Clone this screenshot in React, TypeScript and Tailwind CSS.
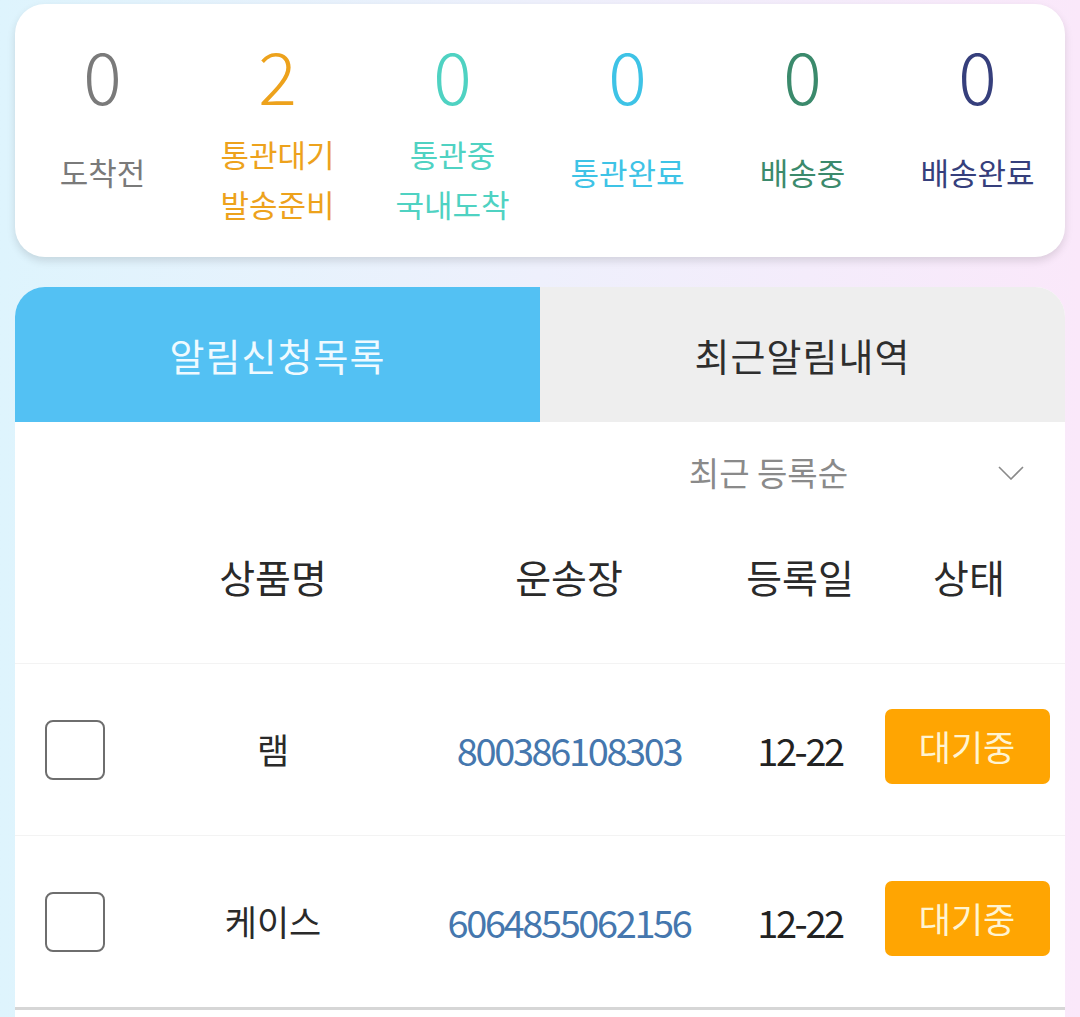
import React from 'react';

const FONT = { fontFamily: '"Noto Sans CJK KR", "Noto Sans", sans-serif' };

const stats = [
  { value: '0', label: ['도착전'], color: 'text-[#7a7a7a]' },
  { value: '2', label: ['통관대기', '발송준비'], color: 'text-[#eda21c]' },
  { value: '0', label: ['통관중', '국내도착'], color: 'text-[#4fd2c2]' },
  { value: '0', label: ['통관완료'], color: 'text-[#3ec3e6]' },
  { value: '0', label: ['배송중'], color: 'text-[#3b8a6c]' },
  { value: '0', label: ['배송완료'], color: 'text-[#363f7c]' },
];

const rows = [
  { name: '램', tracking: '800386108303', date: '12-22' },
  { name: '케이스', tracking: '6064855062156', date: '12-22' },
];

const cols = 'grid grid-cols-[120px_276px_316px_146px_192px] items-center';

const StatusCard = () => (
  <div className="bg-white rounded-[30px] shadow-[0_4px_8px_rgba(0,0,0,0.12)] h-[253px] grid grid-cols-6">
    {stats.map((s, i) => (
      <div key={i} className={`flex flex-col items-center ${s.color}`}>
        <div className="text-[72px] font-light leading-none mt-[34px] h-[72px]">{s.value}</div>
        <div className="h-[110px] mt-[14px] flex flex-col items-center justify-center text-[31px] leading-[50px]">
          {s.label.length === 1 ? (
            <span className="mb-[14px]">{s.label[0]}</span>
          ) : (
            s.label.map((l) => <span key={l}>{l}</span>)
          )}
        </div>
      </div>
    ))}
  </div>
);

const Checkbox = () => (
  <div className="w-[60px] h-[60px] rounded-[8px] border-[2.5px] border-[#6e6e6e] bg-white" />
);

const ListCard = () => (
  <div className="bg-white rounded-t-[30px] overflow-hidden">
    <div className="flex h-[135px]">
      <button className="w-[525px] bg-[#53c1f3] text-[#effaff] text-[38px] tracking-[1px] flex items-center justify-center">
        알림신청목록
      </button>
      <button className="flex-1 bg-[#eeeeee] text-[#2e2e2e] text-[38px] tracking-[1px] flex items-center justify-center">
        최근알림내역
      </button>
    </div>

    <div className="h-[102px] flex items-center justify-end pr-[41px]">
      <span className="text-[33px] text-[#8a8a8a] mr-[150px]">최근 등록순</span>
      <svg width="26" height="14" viewBox="0 0 26 14" fill="none" stroke="#8a8a8a" strokeWidth="1.6">
        <path d="M1 1l12 12L25 1" />
      </svg>
    </div>

    <div className={`${cols} h-[139px] text-[39px] text-[#2a2a2a] pb-[34px]`}>
      <div />
      <div className="text-center">상품명</div>
      <div className="text-center">운송장</div>
      <div className="text-center">등록일</div>
      <div className="text-center">상태</div>
    </div>

    {rows.map((r, i) => (
      <div key={i} className={`${cols} h-[172px] border-t border-[#f3f3f3]`}>
        <div className="flex justify-center">
          <Checkbox />
        </div>
        <div className="text-center text-[35px] text-[#2a2a2a]">{r.name}</div>
        <div className="text-center text-[38px] text-[#4577ae] tracking-[-2.4px]">{r.tracking}</div>
        <div className="text-center text-[38px] text-[#222] tracking-[-2.4px]">{r.date}</div>
        <div className="flex justify-center pr-[4px] pb-[6px]">
          <button className="w-[165px] h-[75px] rounded-[7px] bg-[#ffa502] text-[#fff4d2] text-[35px] flex items-center justify-center">
            대기중
          </button>
        </div>
      </div>
    ))}
    <div className="border-t-[3px] border-[#d6d6d6] h-[20px]" />
  </div>
);

export default function App() {
  return (
    <div style={FONT} className="min-h-[1017px] bg-gradient-to-r from-[#def4fd] via-[#eef0fc] to-[#fae8fa] px-[15px] pt-[4px] flex flex-col gap-[30px]">
      <StatusCard />
      <ListCard />
    </div>
  );
}
